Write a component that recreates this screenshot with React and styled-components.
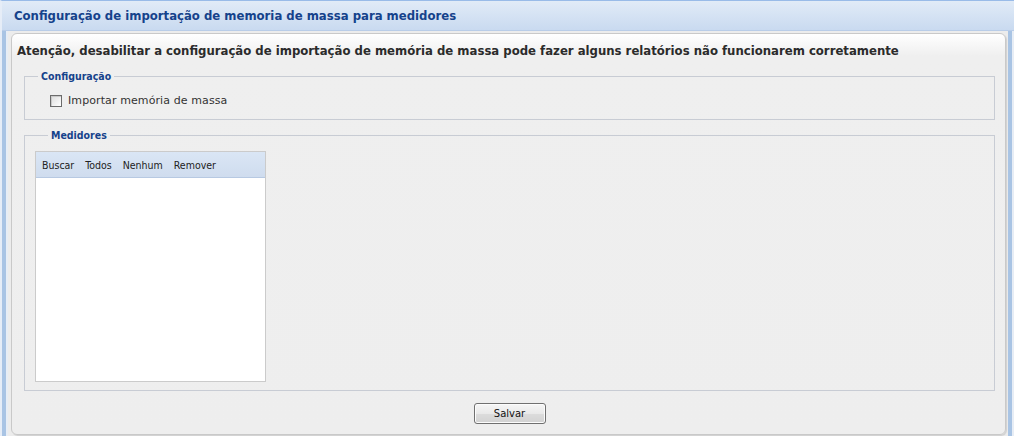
import React from 'react';
import styled, { createGlobalStyle } from 'styled-components';

const GlobalStyle = createGlobalStyle`
  html, body {
    margin: 0;
    padding: 0;
    background: #ffffff;
  }
  body {
    font-family: "DejaVu Sans", Tahoma, sans-serif;
    font-size: 11px;
    color: #222;
  }
`;

const narrow = `"DejaVu Sans Condensed", "DejaVu Sans", Tahoma, sans-serif`;

const Window = styled.div`
  width: 1014px;
  height: 436px;
  box-sizing: border-box;
  display: flex;
  flex-direction: column;
  background: #ececec;
  border-top: 1px solid #99bbe8;
  border-left: 2px solid #e6edf7;
  overflow: hidden;
`;

const Frame = styled.div`
  display: flex;
  flex: 1;
  min-height: 0;
`;

const SideBar = styled.div`
  width: ${p => p.w}px;
  background: #a9c4e4;
  border-right: 2px solid #e7edf5;
  flex: none;
`;

const Column = styled.div`
  flex: 1;
  display: flex;
  flex-direction: column;
  min-width: 0;
`;

const TitleBar = styled.div`
  height: 30px;
  box-sizing: border-box;
  padding: 0 0 0 12px;
  display: flex;
  align-items: center;
  background: linear-gradient(#e1ebf7, #c9daf0);
  border-bottom: 1px solid #b9cde8;
  color: #15428b;
  font-weight: bold;
  font-size: 11.7px;
`;

const Body = styled.div`
  flex: 1;
  display: flex;
  padding: 2px 2px 1px 3px;
  min-height: 0;
`;

const Panel = styled.div`
  flex: 1;
  display: flex;
  flex-direction: column;
  border: 1px solid #c9c9c9;
  border-radius: 6px;
  background: linear-gradient(#ffffff 0px, #efefef 22px, #eeeeee 100%);
  box-shadow: 1px 1px 1px rgba(0, 0, 0, 0.12);
  padding: 8px 10px 10px 5px;
`;

const Warning = styled.div`
  font-family: ${narrow};
  font-weight: bold;
  font-size: 13px;
  color: #2b2b2b;
  margin: 0 0 10px 0;
  line-height: 18px;
  white-space: nowrap;
`;

const Group = styled.fieldset`
  margin: 0 0 ${p => p.gap}px 7px;
  padding: ${p => p.pad};
  border: 1px solid #c8ccd4;
  min-inline-size: 0;
  ${p => p.grow && 'flex: 1;'}
  display: flex;
  flex-direction: column;
`;

const Legend = styled.legend`
  font-family: ${narrow};
  color: #15428b;
  font-weight: bold;
  font-size: 10.5px;
  line-height: 12px;
  padding: 0 3px;
  margin-left: 13px;
`;

const CheckRow = styled.label`
  display: flex;
  align-items: center;
  gap: 6px;
  margin-left: 25px;
  height: 13px;
  color: #333;
  font-size: 11px;
  letter-spacing: 0.1px;
`;

const Box = styled.span`
  width: 10px;
  height: 10px;
  border: 1px solid #6b6b6b;
  background: linear-gradient(135deg, #dcdcdc, #ffffff);
  box-shadow: inset 1px 1px 0 #c9c9c9;
`;

const List = styled.div`
  width: 229px;
  height: 229px;
  border: 1px solid #cbcbcb;
  background: #ffffff;
  display: flex;
  flex-direction: column;
`;

const ListBar = styled.div`
  height: 26px;
  box-sizing: border-box;
  background: linear-gradient(#dae6f5, #cfdcee);
  border-bottom: 1px solid #b7c9e2;
  display: flex;
  align-items: center;
  gap: 11px;
  padding-left: 6px;
  color: #222;
  font-family: ${narrow};
  font-size: 10.5px;
`;

const Footer = styled.div`
  display: flex;
  justify-content: center;
  padding-left: 7px;
`;

const Button = styled.button`
  width: 72px;
  height: 21px;
  font-family: inherit;
  font-size: 10px;
  color: #111;
  border: 1px solid #707070;
  border-radius: 3px;
  background: linear-gradient(#f6f6f6 0%, #e9e9e9 50%, #dcdcdc 51%, #d2d2d2 100%);
  box-shadow: inset 0 0 0 1px #fcfcfc;
`;

export default function App() {
  return (
    <>
      <GlobalStyle />
      <Window>
        <TitleBar>Configuração de importação de memoria de massa para medidores</TitleBar>
        <Frame>
          <SideBar w={4} />
          <Column>
            <Body>
              <Panel>
                <Warning>
                  Atenção, desabilitar a configuração de importação de memória de massa pode fazer alguns relatórios não funcionarem corretamente
                </Warning>
                <Group gap={9} pad="12px 0 12px 0">
                  <Legend>Configuração</Legend>
                  <CheckRow>
                    <Box />
                    Importar memória de massa
                  </CheckRow>
                </Group>
                <Group gap={12} grow pad="10px 0 8px 10px">
                  <Legend>Medidores</Legend>
                  <List>
                    <ListBar>
                      <span>Buscar</span>
                      <span>Todos</span>
                      <span>Nenhum</span>
                      <span>Remover</span>
                    </ListBar>
                  </List>
                </Group>
                <Footer>
                  <Button>Salvar</Button>
                </Footer>
              </Panel>
            </Body>
          </Column>
          <SideBar w={4} />
        </Frame>
      </Window>
    </>
  );
}
